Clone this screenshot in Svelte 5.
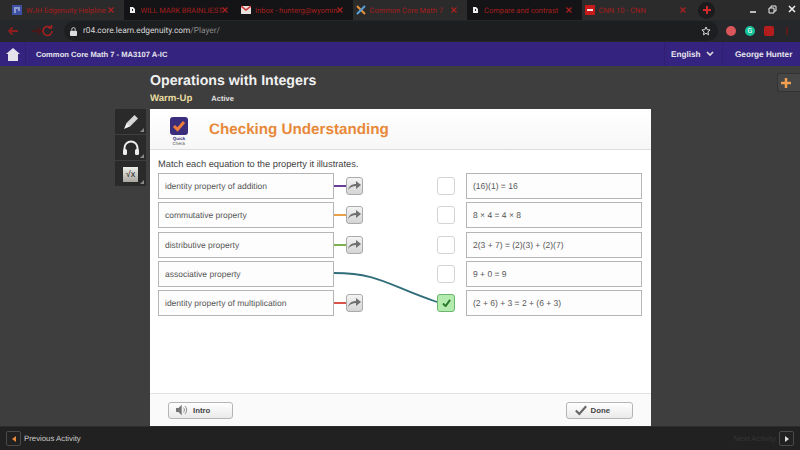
<script>
  const tabs = [
    { title: 'WJH Edgenuity Helpline', icon: 'doc', dark: false },
    { title: 'WILL MARK BRAINLIEST', icon: 'b', dark: true },
    { title: 'Inbox - hunterg@wyomin', icon: 'mail', dark: true },
    { title: 'Common Core Math 7', icon: 'x', dark: false },
    { title: 'Compare and contrast', icon: 'b', dark: true },
    { title: 'CNN 10 - CNN', icon: 'cnn', dark: false }
  ];

  const left = [
    { label: 'identity property of addition', color: '#6a3d9a', connected: false },
    { label: 'commutative property', color: '#e8a04a', connected: false },
    { label: 'distributive property', color: '#7fb04f', connected: false },
    { label: 'associative property', color: '#2a6a72', connected: true },
    { label: 'identity property of multiplication', color: '#d9534a', connected: false }
  ];

  const right = [
    { text: '(16)(1) = 16', checked: false },
    { text: '8 × 4 = 4 × 8', checked: false },
    { text: '2(3 + 7) = (2)(3) + (2)(7)', checked: false },
    { text: '9 + 0 = 9', checked: false },
    { text: '(2 + 6) + 3 = 2 + (6 + 3)', checked: true }
  ];
</script>

<div class="page">
  <header class="chrome">
    <div class="tabstrip">
      {#each tabs as t}
        <div class="tab" class:dark={t.dark}>
          <svg class="favicon" width="10" height="10" viewBox="0 0 10 10">
            {#if t.icon === 'doc'}
              <rect width="10" height="10" fill="#3f51a5" />
              <path d="M2 3h6M2 5h2M6 5h2M2 7h2" stroke="#dfe3f5" />
            {:else if t.icon === 'b'}
              <path d="M3 2h3l2 2v4H3z" fill="#eee" />
              <path d="M5 4h1v2H5z" fill="#222" />
            {:else if t.icon === 'mail'}
              <rect y="1" width="10" height="8" fill="#e8e0dc" />
              <path d="M0 1l5 4 5-4" stroke="#c33" stroke-width="1.500" fill="none" />
            {:else if t.icon === 'x'}
              <path d="M1 1l8 8" stroke="#e8933a" stroke-width="2" />
              <path d="M9 1L1 9" stroke="#5aa0d8" stroke-width="2" />
            {:else}
              <rect width="10" height="10" rx="1" fill="#c71a1a" />
              <path d="M2 5h6" stroke="#f3dcdc" stroke-width="2" />
            {/if}
          </svg>
          <span class="tab-title">{t.title}</span>
          <svg class="tab-x" width="6" height="6" viewBox="0 0 6 6"><path d="M0.500 0.500l5 5M5.500 0.500l-5 5" stroke="#b02020" stroke-width="1.200" /></svg>
        </div>
      {/each}
      <span class="newtab">
        <svg width="8" height="8" viewBox="0 0 8 8"><path d="M4 0v8M0 4h8" stroke="#d02a2a" stroke-width="2" /></svg>
      </span>
      <div class="winctl">
        <svg width="47" height="14" viewBox="0 0 47 14">
          <path d="M1 9h6" stroke="#eee" stroke-width="1.500" />
          <path d="M20 5h5v5h-5zM22 5V3h5v5h-2" stroke="#eee" fill="none" />
          <path d="M40 3l6 6M46 3l-6 6" stroke="#eee" stroke-width="1.500" />
        </svg>
      </div>
    </div>
    <div class="toolbar">
      <svg class="nav" width="48" height="14" viewBox="0 0 48 14">
        <path d="M12 7H3M6.500 3.500L3 7l3.500 3.500" stroke="#8f1d1d" stroke-width="1.800" fill="none" />
        <path d="M26 7h9M31.500 3.500L35 7l-3.500 3.500" stroke="#4a1717" stroke-width="1.800" fill="none" />
        <path d="M46 7a4.500 4.500 0 1 1-1.400-3.300M45.500 1v3h-3" stroke="#a82020" stroke-width="1.500" fill="none" />
      </svg>
      <div class="omnibox">
        <svg width="7" height="9" viewBox="0 0 8 10"><rect y="4" width="8" height="6" rx="1" fill="#ddd" /><path d="M2 4V2.500a2 2 0 0 1 4 0V4" stroke="#ddd" fill="none" /></svg>
        <span class="url">r04.core.learn.edgenuity.com<span class="url-path">/Player/</span></span>
        <svg class="star" width="10" height="10" viewBox="0 0 20 20"><path d="M10 2l2.400 5.400 5.800.6-4.400 3.900 1.300 5.700L10 14.600 4.900 17.600l1.300-5.700L1.800 8l5.800-.6z" stroke="#ddd" stroke-width="2" fill="none" /></svg>
      </div>
      <div class="exts">
        <span class="ext mic"></span>
        <span class="ext gram">G</span>
        <span class="ext red"></span>
        <span class="dots"></span>
      </div>
    </div>
  </header>

  <nav class="topnav">
    <div class="home">
      <svg width="14" height="13" viewBox="0 0 14 13"><path d="M7 0L0 6h2v7h10V6h2z" fill="#e4e2ea" /></svg>
    </div>
    <span class="course">Common Core Math 7 - MA3107 A-IC</span>
    <div class="lang">
      <span>English</span>
      <svg width="8" height="6" viewBox="0 0 8 6"><path d="M1 1l3 3 3-3" stroke="#ddd" stroke-width="1.600" fill="none" /></svg>
    </div>
    <span class="user">George Hunter</span>
  </nav>

  <main class="stage">
    <div class="heading">
      <h1>Operations with Integers</h1>
      <div class="subhead"><span class="warm">Warm-Up</span><span class="active">Active</span></div>
    </div>
    <div class="plus">
      <svg width="10" height="10" viewBox="0 0 10 10"><path d="M5 0v10M0 5h10" stroke="#f0a050" stroke-width="2.500" /></svg>
    </div>

    <div class="workarea">
      <aside class="tools">
        <div class="tool">
          <svg width="18" height="18" viewBox="0 0 18 18"><path d="M3 15l1.500-5L12.500 2l3.500 3.500-8 8z" fill="#d6d6d6" /><path d="M2 16l2.500-5.500 3 3z" fill="#f4f4f4" /></svg>
        </div>
        <div class="tool">
          <svg width="18" height="16" viewBox="0 0 18 16"><path d="M2.500 11V8a6.500 6.500 0 0 1 13 0v3" stroke="#eee" stroke-width="2" fill="none" /><rect x="1" y="9" width="4" height="6" rx="1.500" fill="#eee" /><rect x="13" y="9" width="4" height="6" rx="1.500" fill="#eee" /></svg>
        </div>
        <div class="tool">
          <span class="calc">√x</span>
        </div>
      </aside>

      <section class="card">
        <div class="card-head">
          <div class="qc">
            <div class="qc-badge">
              <svg width="14" height="12" viewBox="0 0 14 12"><path d="M2 6l3.500 3.500L12 2" stroke="#ee7c3a" stroke-width="3" fill="none" /></svg>
            </div>
            <span class="qc-1">Quick</span>
            <span class="qc-2">Check</span>
          </div>
          <h2>Checking Understanding</h2>
        </div>

        <div class="card-body">
          <p class="prompt">Match each equation to the property it illustrates.</p>
          <div class="match">
            <svg class="wire" width="104" height="50" viewBox="0 0 104 50">
              <path d="M0 13C45 13 55 26 103 42" stroke="#2f6d78" stroke-width="1.800" fill="none" />
            </svg>
            {#each left as l, i}
              <div class="row">
                <div class="term">{l.label}</div>
                <div class="link">
                  {#if !l.connected}
                    <span class="stub" style="background: {l.color}"></span>
                    <span class="arrow">
                      <svg width="13" height="10" viewBox="0 0 13 10"><path d="M0 9C1 5 4 3 8 3V0l5 4-5 4V5C5 5 2 6 0 9z" fill="#6f6f6f" /></svg>
                    </span>
                  {/if}
                </div>
                <span class="check" class:on={right[i].checked}>
                  {#if right[i].checked}
                    <svg width="9" height="8" viewBox="0 0 10 9"><path d="M1 5l3 3 5-7" stroke="#2c7a2c" stroke-width="2.200" fill="none" /></svg>
                  {/if}
                </span>
                <div class="answer">{right[i].text}</div>
              </div>
            {/each}
          </div>
        </div>

        <div class="card-foot">
          <button class="btn">
            <svg width="13" height="12" viewBox="0 0 16 13"><path d="M0 4h3l4-4v13l-4-4H0z" fill="#777" /><path d="M9 3.500a4 4 0 0 1 0 6M11 1.500a7 7 0 0 1 0 10" stroke="#777" fill="none" /></svg>
            Intro
          </button>
          <button class="btn done">
            <svg width="12" height="11" viewBox="0 0 14 12"><path d="M1 6l4 4 8-9" stroke="#666" stroke-width="2.500" fill="none" /></svg>
            Done
          </button>
        </div>
      </section>
    </div>
  </main>

  <footer class="bottom">
    <div class="prev">
      <span class="sq"><i class="tri-l"></i></span>
      Previous Activity
    </div>
    <div class="next">
      Next Activity
      <span class="sq"><i class="tri-r"></i></span>
    </div>
  </footer>
</div>

<style>
  :global(body) {
    margin: 0;
    background: #3c3c3c;
  }

  .page {
    width: 800px;
    height: 450px;
    overflow: hidden;
    display: flex;
    flex-direction: column;
    font-family: "Liberation Sans", Arial, sans-serif;
    text-rendering: geometricPrecision;
    background: #3e3e3e;
  }

  /* browser chrome */
  .chrome {
    height: 42px;
    background: #26272a;
    flex: none;
    font-family: Roboto, "Liberation Sans", sans-serif;
  }

  .tabstrip {
    height: 20px;
    display: flex;
    align-items: center;
    padding-left: 9px;
    background: #2b2b2b;
  }

  .tab {
    display: flex;
    align-items: center;
    gap: 4px;
    width: 114.500px;
    height: 20px;
    padding: 0 10px 0 3px;
    box-sizing: border-box;
    flex: none;
  }

  .tab.dark {
    background: #141416;
  }

  .favicon {
    flex: none;
  }

  .tab-title {
    flex: 1;
    min-width: 0;
    white-space: nowrap;
    font-size: 7.500px;
    color: #a31d1d;
  }

  .tab-x {
    flex: none;
  }

  .newtab {
    width: 17px;
    height: 17px;
    margin-left: 2px;
    border-radius: 50%;
    background: #1c1c1e;
    display: flex;
    align-items: center;
    justify-content: center;
  }

  .winctl {
    margin-left: auto;
    padding-right: 4px;
    display: flex;
  }

  .toolbar {
    height: 22px;
    display: flex;
    align-items: center;
    padding-left: 6px;
    gap: 10px;
  }

  .omnibox {
    width: 654px;
    flex: none;
    height: 20px;
    box-sizing: border-box;
    display: flex;
    align-items: center;
    gap: 6px;
    padding: 0 7px 0 6px;
    border-radius: 10px;
    background: #1d1e20;
  }

  .url {
    font-size: 8.300px;
    color: #d8d8d8;
  }

  .url-path {
    color: #8a8a8a;
  }

  .star {
    margin-left: auto;
  }

  .exts {
    display: flex;
    align-items: center;
    gap: 9px;
    margin-left: -2px;
  }

  .ext {
    width: 10px;
    height: 10px;
    border-radius: 50%;
    font-size: 7px;
    line-height: 10px;
    text-align: center;
    color: #fff;
  }

  .mic { background: #d9575a; }
  .gram { background: #15c39a; }
  .red { background: #b51c1c; border-radius: 2px; }

  .dots {
    width: 2px;
    height: 8px;
    margin-left: 3px;
    background: #5a1a1a;
  }

  /* site nav */
  .topnav {
    height: 24px;
    flex: none;
    display: flex;
    align-items: center;
    background: #35247f;
    color: #e6e4ee;
    font-size: 7.600px;
    font-weight: 700;
  }

  .home {
    width: 25px;
    height: 24px;
    display: flex;
    align-items: center;
    justify-content: center;
    border-right: 1px solid #2e1f70;
  }

  .course {
    margin-left: 10px;
  }

  .lang {
    margin-left: auto;
    width: 59px;
    height: 24px;
    box-sizing: border-box;
    padding: 0 8px 0 6px;
    display: flex;
    align-items: center;
    justify-content: space-between;
    border-left: 1px solid #2e1f70;
    border-right: 1px solid #2e1f70;
    font-size: 8.200px;
  }

  .user {
    width: 77px;
    padding-left: 12px;
    box-sizing: border-box;
    font-size: 8.200px;
    white-space: nowrap;
  }

  /* player */
  .stage {
    flex: 1;
    position: relative;
    background: #3e3e3e;
    min-height: 0;
    display: flex;
    flex-direction: column;
  }

  .heading {
    padding: 0 0 0 150px;
    height: 43px;
    box-sizing: border-box;
  }

  h1 {
    margin: 0;
    padding-top: 6px;
    font-size: 14.200px;
    line-height: 18px;
    font-weight: 700;
    color: #f1f1f1;
  }

  .subhead {
    display: flex;
    align-items: center;
    gap: 19px;
    margin-top: 3px;
  }

  .warm {
    font-size: 9.600px;
    font-weight: 700;
    color: #e9dca0;
  }

  .active {
    font-size: 7.500px;
    font-weight: 700;
    color: #e2e2e2;
  }

  .plus {
    position: absolute;
    right: 0;
    top: 7px;
    width: 23px;
    height: 19px;
    box-sizing: border-box;
    padding-right: 6px;
    border: 1px solid #333;
    border-right: none;
    border-radius: 3px 0 0 3px;
    background: #464646;
    display: flex;
    align-items: center;
    justify-content: center;
  }

  .workarea {
    flex: 1;
    display: flex;
    min-height: 0;
    padding-left: 115px;
  }

  .tools {
    width: 31px;
    margin-right: 4px;
    flex: none;
  }

  .tool {
    position: relative;
    height: 25px;
    margin-bottom: 1px;
    background: #2a2a2a;
    display: flex;
    align-items: center;
    justify-content: center;
  }

  .tool::after {
    content: '';
    position: absolute;
    right: 2px;
    bottom: 2px;
    border: 2px solid transparent;
    border-right-color: #8a8a8a;
    border-bottom-color: #8a8a8a;
  }

  .calc {
    width: 15px;
    height: 15px;
    margin-top: 1px;
    background: linear-gradient(#eeeeea, #a8a8a0);
    font-size: 9px;
    line-height: 15px;
    text-align: center;
    color: #222;
  }

  .card {
    width: 500.500px;
    background: #fff;
    display: flex;
    flex-direction: column;
    flex: none;
  }

  .card-head {
    height: 40px;
    flex: none;
    display: flex;
    align-items: center;
    border-bottom: 1px solid #ddd;
    background: linear-gradient(#fff, #f7f7f7);
  }

  .qc {
    width: 59px;
    padding-top: 4px;
    padding-right: 1px;
    box-sizing: border-box;
    display: flex;
    flex-direction: column;
    align-items: center;
  }

  .qc-badge {
    width: 18px;
    height: 18px;
    border-radius: 3px;
    background: #3a2d7c;
    display: flex;
    align-items: center;
    justify-content: center;
  }

  .qc-1 {
    font-size: 4.500px;
    font-weight: 700;
    color: #37307c;
    margin-top: 1px;
  }

  .qc-2 {
    font-size: 4.500px;
    color: #555;
  }

  h2 {
    margin: 0;
    font-size: 15.200px;
    font-weight: 700;
    color: #e8893a;
  }

  .card-body {
    flex: 1;
    padding: 8px 8px 0;
    min-height: 0;
  }

  .prompt {
    margin: 0 0 3px;
    font-size: 9.300px;
    line-height: 12px;
    color: #444;
  }

  .match {
    position: relative;
    display: flex;
    flex-direction: column;
    gap: 3.250px;
  }

  .wire {
    position: absolute;
    left: 176px;
    top: 87px;
    pointer-events: none;
  }

  .row {
    display: flex;
    align-items: center;
    height: 26px;
  }

  .term,
  .answer {
    height: 100%;
    width: 176px;
    padding-left: 6px;
    box-sizing: border-box;
    flex: none;
    display: flex;
    align-items: center;
    background: #fdfdfd;
    border: 1px solid #b5b5b5;
    font-size: 8.500px;
    color: #555;
  }

  .link {
    width: 103px;
    flex: none;
    display: flex;
    align-items: center;
  }

  .stub {
    width: 12px;
    height: 2px;
    flex: none;
  }

  .arrow {
    width: 17px;
    height: 18px;
    box-sizing: border-box;
    border: 1px solid #aaa;
    border-radius: 3px;
    background: linear-gradient(#f4f4f4, #d4d4d4);
    display: flex;
    align-items: center;
    justify-content: center;
  }

  .check {
    width: 18px;
    height: 18px;
    box-sizing: border-box;
    flex: none;
    margin-right: 11px;
    border: 1px solid #d4d4d4;
    border-radius: 3px;
    background: #fff;
    display: flex;
    align-items: center;
    justify-content: center;
  }

  .check.on {
    border-color: #6cb56c;
    background: #b4ecb0;
  }

  .card-foot {
    height: 33px;
    box-sizing: border-box;
    flex: none;
    display: flex;
    align-items: center;
    justify-content: space-between;
    padding: 0 18px;
    border-top: 1px solid #e2e2e2;
    background: #fafafa;
  }

  .btn {
    width: 65px;
    height: 17px;
    padding: 0 0 0 7px;
    box-sizing: border-box;
    display: flex;
    align-items: center;
    gap: 4px;
    border: 1px solid #b5b5b5;
    border-radius: 3px;
    background: linear-gradient(#fff, #e9e9e9);
    font-family: inherit;
    font-size: 7.800px;
    font-weight: 700;
    color: #444;
  }

  .btn.done {
    width: 67px;
    padding-left: 8px;
  }

  /* bottom bar */
  .bottom {
    height: 24px;
    flex: none;
    display: flex;
    align-items: center;
    justify-content: space-between;
    padding: 0 6px;
    background: #212121;
    border-top: 1px solid #2c2c2c;
    box-sizing: border-box;
    font-size: 7.800px;
    color: #c8c8c8;
  }

  .prev,
  .next {
    display: flex;
    align-items: center;
    gap: 3px;
  }

  .next {
    color: #353535;
  }

  .sq {
    width: 15px;
    height: 15px;
    box-sizing: border-box;
    border: 1px solid #4a4a4a;
    border-radius: 2px;
    display: flex;
    align-items: center;
    justify-content: center;
  }

  .tri-l {
    border: 3px solid transparent;
    border-right: 4px solid #e8893a;
    border-left: 0;
  }

  .tri-r {
    border: 3px solid transparent;
    border-left: 4px solid #ddd;
    border-right: 0;
  }
</style>
